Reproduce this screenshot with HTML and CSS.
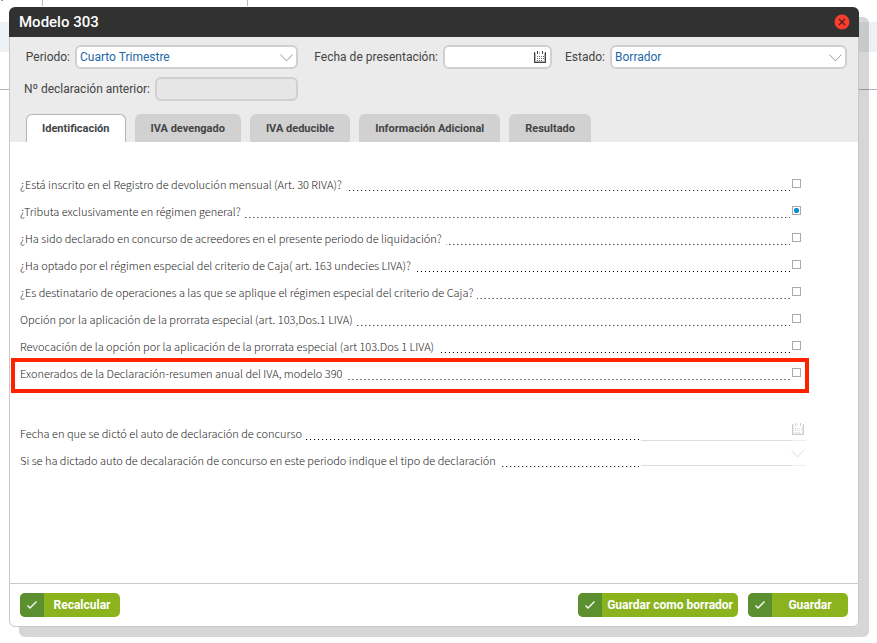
FILE: index.html
```
<!DOCTYPE html>
<html lang="es">
<head>
<meta charset="utf-8">
<meta name="viewport" content="width=device-width, initial-scale=1">
<title>Modelo 303</title>
<link rel="stylesheet" href="styles.css">
</head>
<body>
<svg class="symbols" aria-hidden="true">
  <symbol id="calendar" viewBox="0 0 12 12">
    <path d="M0 1h1v11H0zM11 1h1v11h-1zM0 11h12v1H0zM3 0h1v3H3zM8 0h1v3H8z"/>
    <path d="M1 2h1v9H1zM10 2h1v9h-1zM5 1h1v2H5zM1 10h10v1H1z" opacity=".4"/>
    <path d="M3 5h1v1H3zM5 5h1v1H5zM7 5h1v1H7zM9 5h1v1H9zM3 7h1v1H3zM5 7h1v1H5zM7 7h1v1H7zM9 7h1v1H9zM3 9h1v1H3zM5 9h1v1H5zM7 9h1v1H7z" opacity=".8"/>
  </symbol>
  <symbol id="chevron" viewBox="0 0 13 8">
    <path d="M.5.5l6 6.500 6-6.500" fill="none" stroke="currentColor"/>
  </symbol>
  <symbol id="check" viewBox="0 0 12 10">
    <path d="M1.500 5.500l2.500 2.500 6.500-6.500" fill="none" stroke="currentColor" stroke-width="1.300"/>
  </symbol>
</svg>
<main class="dialog">
  <header class="titlebar">
    <h1>Modelo 303</h1>
    <button class="close" type="button" aria-label="Cerrar">
      <svg viewBox="0 0 16 16"><circle cx="8" cy="8" r="7.500" fill="#fb3d2e"/><path d="M5 5l6 6M11 5l-6 6" stroke="#4b2020" stroke-width="1.200"/></svg>
    </button>
  </header>

  <section class="top">
    <div class="fields">
      <div class="field">
        <label class="label-s" for="periodo">Periodo:</label>
        <div class="control">
          <select id="periodo"><option>Cuarto Trimestre</option></select>
          <svg class="chevron"><use href="#chevron"/></svg>
        </div>
      </div>
      <div class="field">
        <label class="label-l" for="fecha">Fecha de presentación:</label>
        <div class="control">
          <input id="fecha" type="text">
          <svg class="calendar"><use href="#calendar"/></svg>
        </div>
      </div>
      <div class="field">
        <label class="label-s" for="estado">Estado:</label>
        <div class="control">
          <select id="estado"><option>Borrador</option></select>
          <svg class="chevron"><use href="#chevron"/></svg>
        </div>
      </div>
      <div class="field">
        <label class="label-m" for="anterior">Nº declaración anterior:</label>
        <div class="control"><input id="anterior" type="text" disabled></div>
      </div>
    </div>
    <nav class="tabs" role="tablist">
      <button class="tab active" type="button" role="tab" aria-selected="true">Identificación</button>
      <button class="tab" type="button" role="tab">IVA devengado</button>
      <button class="tab" type="button" role="tab">IVA deducible</button>
      <button class="tab" type="button" role="tab">Información Adicional</button>
      <button class="tab" type="button" role="tab">Resultado</button>
    </nav>
  </section>

  <section class="content">
    <div class="questions">
      <div class="row"><label for="q1">¿Está inscrito en el Registro de devolución mensual (Art. 30 RIVA)?</label><span class="dots"></span><input id="q1" type="checkbox"></div>
      <div class="row"><label for="q2">¿Tributa exclusivamente en régimen general?</label><span class="dots"></span><input id="q2" type="checkbox" checked></div>
      <div class="row"><label for="q3">¿Ha sido declarado en concurso de acreedores en el presente periodo de liquidación?</label><span class="dots"></span><input id="q3" type="checkbox"></div>
      <div class="row"><label for="q4">¿Ha optado por el régimen especial del criterio de Caja( art. 163 undecies LIVA)?</label><span class="dots"></span><input id="q4" type="checkbox"></div>
      <div class="row"><label for="q5">¿Es destinatario de operaciones a las que se aplique el régimen especial del criterio de Caja?</label><span class="dots"></span><input id="q5" type="checkbox"></div>
      <div class="row"><label for="q6">Opción por la aplicación de la prorrata especial (art. 103,Dos.1 LIVA)</label><span class="dots"></span><input id="q6" type="checkbox"></div>
      <div class="row"><label for="q7">Revocación de la opción por la aplicación de la prorrata especial (art 103.Dos 1 LIVA)</label><span class="dots"></span><input id="q7" type="checkbox"></div>
      <div class="row highlight"><label for="q8">Exonerados de la Declaración-resumen anual del IVA, modelo 390</label><span class="dots"></span><input id="q8" type="checkbox"></div>
    </div>
    <div class="details">
      <div class="row">
        <label for="auto">Fecha en que se dictó el auto de declaración de concurso</label><span class="dots"></span>
        <div class="line"><input id="auto" type="text" disabled><svg class="calendar"><use href="#calendar"/></svg></div>
      </div>
      <div class="row">
        <label for="tipo">Si se ha dictado auto de decalaración de concurso en este periodo indique el tipo de declaración</label><span class="dots"></span>
        <div class="line short"><select id="tipo" disabled><option></option></select><svg class="chevron"><use href="#chevron"/></svg></div>
      </div>
    </div>
  </section>

  <footer class="actions">
    <button class="action" type="button"><span class="tick"><svg><use href="#check"/></svg></span><span class="text">Recalcular</span></button>
    <span class="spacer"></span>
    <button class="action" type="button"><span class="tick"><svg><use href="#check"/></svg></span><span class="text">Guardar como borrador</span></button>
    <button class="action" type="button"><span class="tick"><svg><use href="#check"/></svg></span><span class="text">Guardar</span></button>
  </footer>
</main>
</body>
</html>
```
FILE: styles.css
```
* { box-sizing: border-box; }

body {
  margin: 0;
  padding: 7px 18px 16px 9px;
  min-height: 100vh;
  display: flex;
  font-family: Roboto, sans-serif;
  color: #444;
  background:
    linear-gradient(#bbb, #bbb) 42px 0 / 1px 6px no-repeat,
    linear-gradient(#bbb, #bbb) 247px 0 / 1px 6px no-repeat,
    linear-gradient(#999, #999) 1px 0 / 2px 1px no-repeat,
    linear-gradient(#b5b5bb, #b5b5bb) 0 89px / 100% 1px no-repeat,
    linear-gradient(#edf1f4, #edf1f4) 0 22px / 100% 30px no-repeat,
    #fff;
}

button, input, select { font: inherit; color: inherit; margin: 0; }
.symbols { position: absolute; width: 0; height: 0; }

.dialog {
  flex: 1;
  min-width: 0;
  display: flex;
  flex-direction: column;
  border-radius: 6px;
  background: #fff;
  box-shadow: 10px 10px 0 rgba(0, 0, 0, .16);
}

.titlebar {
  display: flex;
  align-items: center;
  justify-content: space-between;
  height: 30px;
  padding: 0 9px 0 10px;
  border-radius: 6px 6px 0 0;
  background: #313131;
  color: #fff;
}
.titlebar h1 { margin: 0; font-size: 15px; font-weight: 500; }
.close { width: 16px; height: 16px; padding: 0; border: 0; background: none; }
.close svg { display: block; width: 16px; height: 16px; }

.top {
  padding: 8px 11px 0 10px;
  background: #ebebeb;
  border: solid #c8c8c8;
  border-width: 0 1px;
}
.fields {
  display: grid;
  grid-template-columns: 278px 254px 1fr;
  row-gap: 8px;
  font-size: 12px;
}
.field { display: flex; align-items: center; gap: 5px; }
.field label { flex: none; text-align: right; white-space: nowrap; }
.label-s { min-width: 50px; }
.label-m { width: 130px; }
.label-l { width: 140px; }
.field:nth-child(3) label { width: 53px; }

.control { position: relative; flex: 1; min-width: 0; }
.control input, .control select {
  display: block;
  width: 100%;
  height: 24px;
  padding: 0 3px;
  border: 2px solid #d0d0d0;
  border-radius: 6px;
  background: #fff;
  color: #2468a8;
  appearance: none;
}
.control input:disabled { background: #e6e6e6; }
.control .chevron { position: absolute; right: 5px; top: 9px; color: #999; }
.control .calendar { position: absolute; right: 6px; top: 6px; fill: #444; }
.chevron { width: 13px; height: 8px; }
.calendar { width: 12px; height: 12px; }

.tabs { display: flex; gap: 9px; margin-top: 13px; padding-left: 6px; }
.tab {
  height: 28px;
  padding: 0 16px;
  border: 0;
  border-radius: 6px 6px 0 0;
  background: #d1d1d1;
  font-size: 11px;
  font-weight: 700;
  white-space: nowrap;
}
.tab.active { padding: 0 15px; border: 1px solid #b4b4b4; border-bottom: 0; background: #fff; }

.content {
  flex: 1;
  padding: 29px 52px 24px 10px;
  border: solid #c8c8c8;
  border-width: 0 1px;
  font-family: "Noto Sans CJK SC", sans-serif;
  font-size: 11px;
  font-weight: 300;
  line-height: 27px;
  color: #1c1c1c;
}
.questions { padding-right: 5px; }
.details { margin-top: 33px; }
.row { position: relative; display: flex; height: 27px; }
.row label { white-space: nowrap; }
.dots {
  flex: 1;
  height: 20px;
  margin: 0 2px 0 4px;
  background: linear-gradient(to right, transparent 3px, #000 3px) right bottom / 4px 1px repeat-x;
}
.row input[type="checkbox"] {
  display: grid;
  place-items: center;
  width: 9px;
  height: 9px;
  margin-top: 8px;
  border: 1px solid #aaa;
  background: #fff;
  appearance: none;
}
.row input:checked::before {
  content: "";
  width: 5px;
  height: 5px;
  border-radius: 2px;
  background: #0b8bd4;
}
.highlight::after {
  content: "";
  position: absolute;
  inset: -2px -8px -6px -9px;
  border: 4px solid #ff2200;
  pointer-events: none;
}

.line {
  position: relative;
  width: 165px;
  height: 21px;
  background: linear-gradient(to right, #ddd 151px, #eee 151px) bottom / 100% 1px no-repeat;
}
.line.short { height: 19px; }
.line input, .line select {
  display: block;
  width: 100%;
  height: 18px;
  border: 0;
  background: none;
  appearance: none;
}
.line svg { position: absolute; top: 3px; right: 2px; color: #ddd; fill: #ccc; }

.actions {
  display: flex;
  gap: 10px;
  padding: 9px 10px;
  border: 1px solid #c8c8c8;
  border-radius: 0 0 6px 6px;
}
.spacer { flex: 1; }
.action {
  display: flex;
  min-width: 100px;
  height: 24px;
  padding: 0;
  border: 0;
  border-radius: 5px;
  overflow: hidden;
  background: #8ab31e;
  color: #fff;
  font-size: 12px;
  font-weight: 700;
  line-height: 24px;
}
.tick { display: grid; place-items: center; width: 24px; height: 24px; background: #5b8f30; }
.tick svg { width: 12px; height: 10px; }
.text { flex: 1; padding: 0 5px; white-space: nowrap; }
```
